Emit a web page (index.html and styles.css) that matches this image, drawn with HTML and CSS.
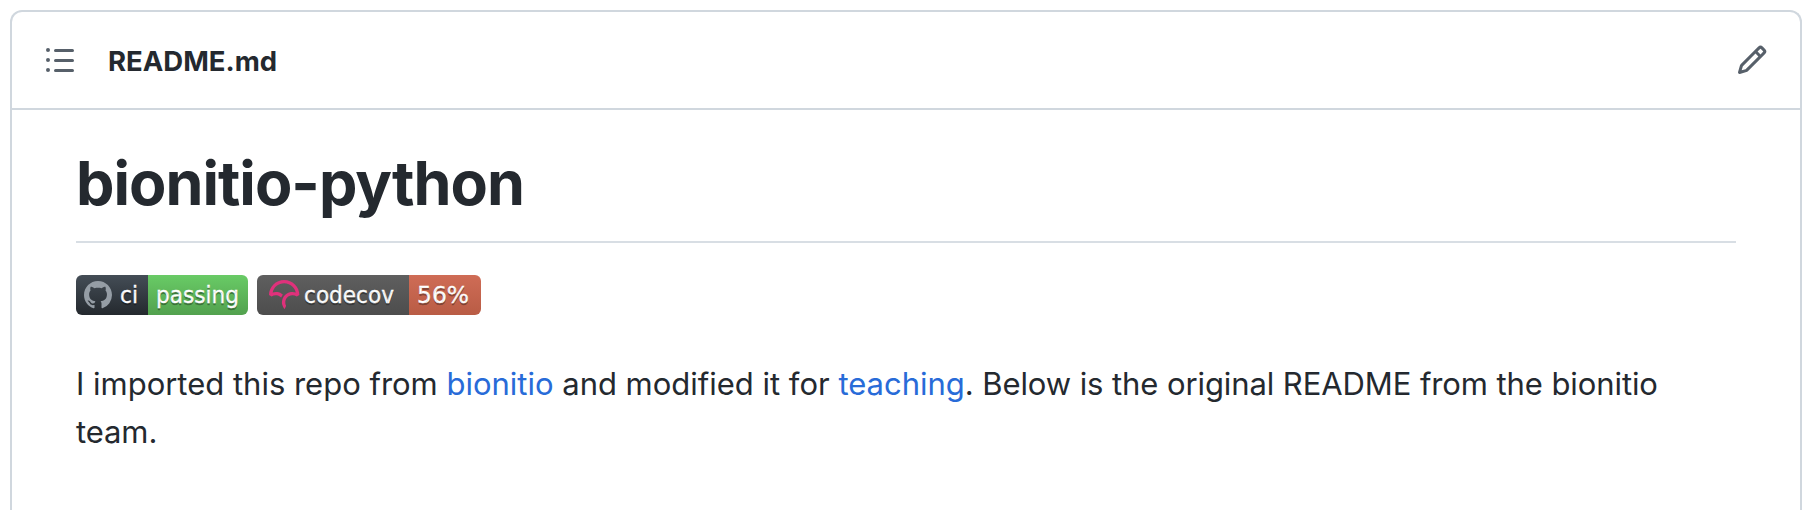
FILE: index.html
```html
<!DOCTYPE html>
<html lang="en">
<head>
<meta charset="utf-8">
<title>README.md</title>
<link rel="stylesheet" href="styles.css">
</head>
<body>
<section class="readme">
  <header class="readme-header">
    <svg class="icon" viewBox="0 0 16 16" aria-hidden="true"><path fill-rule="evenodd" d="M2 4a1 1 0 100-2 1 1 0 000 2zm3.75-1.5a.75.75 0 000 1.5h8.5a.75.75 0 000-1.5h-8.5zm0 5a.75.75 0 000 1.5h8.5a.75.75 0 000-1.5h-8.5zm0 5a.75.75 0 000 1.5h8.5a.75.75 0 000-1.5h-8.5zM3 8a1 1 0 11-2 0 1 1 0 012 0zm-1 6a1 1 0 100-2 1 1 0 000 2z"/></svg>
    <h2 class="file-name">README.md</h2>
    <svg class="icon" viewBox="0 0 16 16" aria-hidden="true"><path fill-rule="evenodd" d="M11.013 1.427a1.75 1.75 0 012.474 0l1.086 1.086a1.75 1.75 0 010 2.474l-8.61 8.61c-.21.21-.47.364-.756.445l-3.251.93a.75.75 0 01-.927-.928l.929-3.25a1.75 1.75 0 01.445-.758l8.61-8.61zm1.414 1.06a.25.25 0 00-.354 0L10.811 3.75l1.439 1.44 1.263-1.263a.25.25 0 000-.354l-1.086-1.086zM11.189 6.25L9.75 4.81l-6.286 6.287a.25.25 0 00-.064.108l-.558 1.953 1.953-.558a.249.249 0 00.108-.064l6.286-6.286z"/></svg>
  </header>
  <article class="markdown">
    <h1 class="title">bionitio-python</h1>
    <div class="badges">
      <svg class="badge" width="172" height="40" viewBox="0 0 172 40">
        <defs>
          <linearGradient id="ci-label" x1="0" y1="0" x2="0" y2="1"><stop offset="0" stop-color="#444d56"/><stop offset="1" stop-color="#24292e"/></linearGradient>
          <linearGradient id="ci-state" x1="0" y1="0" x2="0" y2="1"><stop offset="0" stop-color="#69cb66"/><stop offset="1" stop-color="#52a14e"/></linearGradient>
          <clipPath id="ci-shape"><rect width="172" height="40" rx="6"/></clipPath>
        </defs>
        <g clip-path="url(#ci-shape)">
          <rect width="72" height="40" fill="url(#ci-label)"/>
          <rect x="72" width="100" height="40" fill="url(#ci-state)"/>
        </g>
        <path fill="#959da5" transform="translate(8 6) scale(1.75)" d="M8 0C3.58 0 0 3.58 0 8c0 3.54 2.29 6.53 5.47 7.59.4.07.55-.17.55-.38 0-.19-.01-.82-.01-1.49-2.01.37-2.53-.49-2.69-.94-.09-.23-.48-.94-.82-1.13-.28-.15-.68-.52-.01-.53.63-.01 1.08.58 1.23.82.72 1.21 1.87.87 2.33.66.07-.52.28-.87.51-1.07-1.78-.2-3.64-.89-3.64-3.95 0-.87.31-1.59.82-2.15-.08-.2-.36-1.02.08-2.12 0 0 .67-.21 2.2.82.64-.18 1.32-.27 2-.27s1.36.09 2 .27c1.53-1.04 2.2-.82 2.2-.82.44 1.1.16 1.92.08 2.12.51.56.82 1.27.82 2.15 0 3.07-1.87 3.75-3.65 3.95.29.25.54.73.54 1.48 0 1.07-.01 1.93-.01 2.2 0 .21.15.46.55.38A8.01 8.01 0 0016 8c0-4.42-3.58-8-8-8z"/>
        <text class="badge-text" x="44" y="28" textLength="18" lengthAdjust="spacingAndGlyphs">ci</text>
        <text class="badge-text" x="80" y="28" textLength="83" lengthAdjust="spacingAndGlyphs">passing</text>
      </svg>
      <svg class="badge" width="224" height="40" viewBox="0 0 224 40">
        <defs>
          <linearGradient id="cov-label" x1="0" y1="0" x2="0" y2="1"><stop offset="0" stop-color="#5f5f5f"/><stop offset="1" stop-color="#4d4d4d"/></linearGradient>
          <linearGradient id="cov-state" x1="0" y1="0" x2="0" y2="1"><stop offset="0" stop-color="#cf6c56"/><stop offset="1" stop-color="#b95c45"/></linearGradient>
          <clipPath id="cov-shape"><rect width="224" height="40" rx="6"/></clipPath>
        </defs>
        <g clip-path="url(#cov-shape)">
          <rect width="152" height="40" fill="url(#cov-label)"/>
          <rect x="152" width="72" height="40" fill="url(#cov-state)"/>
        </g>
        <path fill="#e0317b" transform="translate(12 5) scale(.66)" d="M23.013 0C10.333.009.01 10.22 0 22.762v.058l3.914 2.275.053-.036a11.291 11.291 0 0 1 8.352-1.767 10.911 10.911 0 0 1 5.5 2.726l.673.624.38-.828c.368-.802.793-1.556 1.264-2.24.19-.276.398-.554.637-.851l.393-.49-.484-.404a16.08 16.08 0 0 0-7.453-3.466 16.482 16.482 0 0 0-7.705.449C7.386 10.683 14.56 5.016 23.03 5.01c4.779 0 9.272 1.84 12.651 5.18 2.41 2.382 4.069 5.35 4.807 8.591a16.53 16.53 0 0 0-4.792-.723l-.292-.002a16.707 16.707 0 0 0-1.902.14l-.08.012c-.28.037-.524.074-.748.115-.11.019-.218.041-.327.063-.257.052-.51.108-.75.169l-.265.067a16.39 16.39 0 0 0-.926.276l-.056.018c-.682.23-1.36.511-2.016.838l-.052.026c-.29.145-.584.305-.899.49l-.069.04a15.596 15.596 0 0 0-4.061 3.466l-.145.175c-.29.36-.521.666-.723.96-.17.247-.34.513-.552.864l-.116.199c-.17.292-.32.57-.449.824l-.03.057a16.116 16.116 0 0 0-.843 2.029l-.034.102a15.65 15.65 0 0 0-.786 5.174l.003.214a21.523 21.523 0 0 0 .04.754c.009.119.02.237.032.355.014.145.032.29.049.432l.01.08c.01.067.017.133.026.197.034.242.074.48.119.72.463 2.419 1.62 4.836 3.345 6.99l.078.098.08-.095c.688-.81 2.395-3.38 2.539-4.922l.003-.029-.014-.025a10.727 10.727 0 0 1-1.226-4.956c0-5.76 4.545-10.544 10.343-10.89l.381-.014a11.403 11.403 0 0 1 6.651 1.957l.054.036 3.862-2.237.05-.03v-.056c.006-6.08-2.384-11.793-6.729-16.089C34.932 2.361 29.16 0 23.013 0"/>
        <text class="badge-text" x="47" y="28" textLength="90" lengthAdjust="spacingAndGlyphs">codecov</text>
        <text class="badge-text" x="160" y="28" textLength="52" lengthAdjust="spacingAndGlyphs">56%</text>
      </svg>
    </div>
    <p class="intro">I imported this repo from <a class="link" href="#">bionitio</a> and modified it for <a class="link" href="#">teaching</a><span class="note">. Below is the original README from the bionitio team.</span></p>
  </article>
</section>
</body>
</html>
```
FILE: styles.css
```css
* { box-sizing: border-box; }

body {
  margin: 0;
  height: 510px;
  padding: 10px 10px 0;
  background: #fff;
  color: #24292f;
  font-family: Inter, "Liberation Sans", sans-serif;
}

.readme {
  height: 500px;
  border: 2px solid #d0d7de;
  border-bottom: 0;
  border-radius: 12px 12px 0 0;
}

.readme-header {
  display: flex;
  align-items: center;
  height: 98px;
  padding: 0 32px;
  border-bottom: 2px solid #d0d7de;
}

.icon {
  width: 32px;
  height: 32px;
  fill: #57606a;
}

.file-name {
  flex: 1;
  margin: 0 0 0 32px;
  padding-top: 2px;
  font-size: 27.5px;
  line-height: 42px;
  font-weight: 700;
}

.markdown { padding: 33px 64px 0; }

.title {
  height: 100px;
  margin: 0 0 32px;
  border-bottom: 2px solid #d8dee4;
  font-size: 61px;
  line-height: 80px;
  font-weight: 700;
  letter-spacing: -0.98px;
}

.badges {
  display: flex;
  gap: 9px;
  height: 40px;
  margin-bottom: 45px;
}

.badge-text {
  fill: #fff;
  stroke: #fff;
  stroke-width: .35px;
  font-family: "DejaVu Sans", sans-serif;
  font-size: 23px;
  text-shadow: 0 2px 0 rgba(1, 1, 1, .3);
}

.intro {
  margin: 0;
  font-size: 31px;
  line-height: 48px;
  letter-spacing: -0.01px;
}

.note { letter-spacing: -0.09px; }

.link {
  color: #286bd8;
  text-decoration: none;
}
```
